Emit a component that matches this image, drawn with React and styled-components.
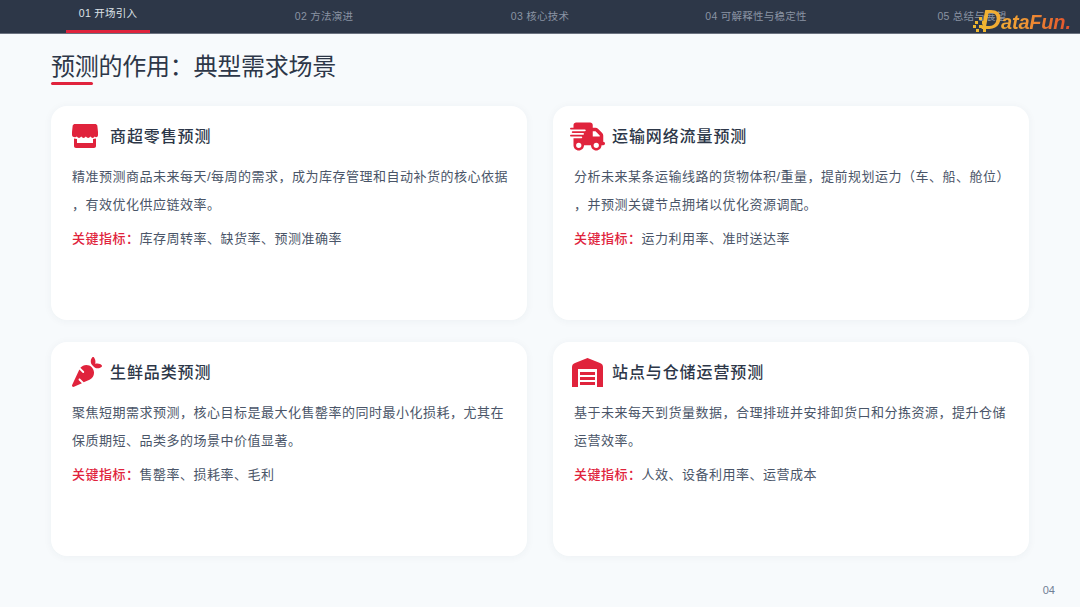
import React from 'react';
import styled, { createGlobalStyle } from 'styled-components';
import { FaTruckFast, FaCarrot } from 'react-icons/fa6';

const GlobalStyle = createGlobalStyle`
  html, body { margin: 0; padding: 0; background: #f7fafc; }
  body { font-family: "Liberation Sans", "Noto Sans CJK SC", sans-serif; }
`;

const Page = styled.div`
  width: 1080px;
  height: 607px;
  position: relative;
  overflow: hidden;
  background: #f7fafc;
  display: flex;
  flex-direction: column;
`;

const Nav = styled.nav`
  height: 33px;
  flex: none;
  display: flex;
  background: #2d3748;
  border-bottom: 1px solid #6b7280;
`;

const Tab = styled.div`
  flex: 1;
  display: flex;
  justify-content: center;
`;

const TabLabel = styled.div`
  box-sizing: border-box;
  min-width: 84px;
  height: 33px;
  display: flex;
  align-items: center;
  justify-content: center;
  padding-bottom: ${p => (p.$active ? '5px' : '2px')};
  white-space: nowrap;
  font-size: 10.5px;
  letter-spacing: 0.25px;
  color: ${p => (p.$active ? '#dfe3e8' : '#8a93a3')};
  border-bottom: ${p => (p.$active ? '3px solid #e0233c' : 'none')};
`;

const Logo = styled.div`
  position: absolute;
  top: 5px;
  left: 973px;
  display: flex;
  align-items: flex-end;
`;

const LogoText = styled.span`
  font-family: "Liberation Sans", sans-serif;
  font-weight: 700;
  font-style: italic;
  font-size: 20px;
  line-height: 29px;
  letter-spacing: -0.2px;
  margin-left: -5px;
  background: linear-gradient(90deg, #f2b632 0%, #f09a35 45%, #e2502d 100%);
  -webkit-background-clip: text;
  background-clip: text;
  color: transparent;
`;

const LogoInitial = styled.span`
  font-size: 28px;
`;

const LogoDots = styled.svg`
  flex: none;
  margin-bottom: 5px;
`;

const Main = styled.main`
  flex: 1;
  padding: 18px 51px 0;
`;

const Title = styled.h1`
  margin: 0;
  font-size: 24px;
  line-height: 30px;
  font-weight: 400;
  letter-spacing: -0.25px;
  color: #2d3748;
  &::after {
    content: '';
    display: block;
    width: 42px;
    height: 3px;
    border-radius: 2px;
    background: #e0233c;
  }
`;

const Grid = styled.div`
  margin-top: 21px;
  display: grid;
  grid-template-columns: 476px 476px;
  grid-auto-rows: 214px;
  column-gap: 26px;
  row-gap: 22px;
`;

const Card = styled.section`
  background: #fff;
  border-radius: 16px;
  box-shadow: 0 1px 8px rgba(45, 55, 72, 0.05);
  padding: 14px 21px 0;
`;

const CardHead = styled.div`
  display: flex;
  align-items: center;
  height: 32px;
  margin-bottom: 11px;
`;

const IconSlot = styled.div`
  width: ${p => 38 - p.$shift}px;
  flex: none;
  display: flex;
  color: #e0233c;
  font-size: ${p => p.$size || 24}px;
  margin-left: ${p => p.$shift}px;
`;

const CardTitle = styled.h2`
  margin: 0 0 2px;
  font-size: 16px;
  font-weight: 500;
  letter-spacing: 0.9px;
  color: #2d3748;
`;

const Line = styled.div`
  font-size: 13px;
  line-height: 28px;
  letter-spacing: 0.5px;
  color: #4a5568;
  white-space: nowrap;
`;

const Metric = styled(Line)`
  margin-top: 6px;
`;

const MetricKey = styled.strong`
  font-weight: 500;
  color: #e0233c;
`;

const PageNum = styled.div`
  position: absolute;
  right: 25px;
  bottom: 11px;
  font-size: 11px;
  color: #718096;
`;

const StoreIcon = () => (
  <svg width="26" height="24" viewBox="0 0 26 24" fill="currentColor">
    <path d="M3 0H23C24 0 25 .6 25.3 1.6L26 8V11C26 13 23.8 14 22.8 12.6C21.6 14.4 19.6 14.4 18.4 12.6C17.2 14.4 15.2 14.4 13.8 12.6C12.6 14.4 10.6 14.4 9.2 12.6C8 14.4 6 14.4 4.8 12.6C3.4 14 0 13 0 11V8L.7 1.6C1 .6 2 0 3 0Z" />
    <path d="M2 14.5L5 15V19H21V15L24 14.5V22C24 23.2 23.2 24 22 24H4C2.8 24 2 23.2 2 22Z" />
  </svg>
);

const WarehouseIcon = () => (
  <svg width="31" height="29" viewBox="0 0 31 29" fill="currentColor">
    <path d="M15.5 0L28 5C30 5.8 31 7 31 9V29H25V11H6V29H0V9C0 7 1 5.8 3 5Z" />
    <rect x="8" y="14" width="15" height="3" />
    <rect x="8" y="19" width="15" height="3" />
    <rect x="8" y="24" width="15" height="3" />
  </svg>
);

const tabs = ['01 开场引入', '02 方法演进', '03 核心技术', '04 可解释性与稳定性', '05 总结与展望'];

const cards = [
  {
    icon: <StoreIcon />, shift: 0,
    title: '商超零售预测',
    lines: ['精准预测商品未来每天/每周的需求，成为库存管理和自动补货的核心依据', '，有效优化供应链效率。'],
    metrics: '库存周转率、缺货率、预测准确率',
  },
  {
    icon: <FaTruckFast />, size: 35, shift: -4,
    title: '运输网络流量预测',
    lines: ['分析未来某条运输线路的货物体积/重量，提前规划运力（车、船、舱位）', '，并预测关键节点拥堵以优化资源调配。'],
    metrics: '运力利用率、准时送达率',
  },
  {
    icon: <FaCarrot />, size: 30, shift: 0,
    title: '生鲜品类预测',
    lines: ['聚焦短期需求预测，核心目标是最大化售罄率的同时最小化损耗，尤其在', '保质期短、品类多的场景中价值显著。'],
    metrics: '售罄率、损耗率、毛利',
  },
  {
    icon: <WarehouseIcon />, shift: -2,
    title: '站点与仓储运营预测',
    lines: ['基于未来每天到货量数据，合理排班并安排卸货口和分拣资源，提升仓储', '运营效率。'],
    metrics: '人效、设备利用率、运营成本',
  },
];

const App = () => (
  <Page>
    <GlobalStyle />
    <Nav>
      {tabs.map((t, i) => (
        <Tab key={t}>
          <TabLabel $active={i === 0}>{t}</TabLabel>
        </Tab>
      ))}
    </Nav>
    <Logo>
      <LogoDots width="13" height="15" viewBox="0 0 13 15" fill="#eeb62f">
        <rect x="6" y="0" width="3" height="3" />
        <rect x="2" y="4" width="3" height="3" />
        <rect x="9" y="4" width="3" height="3" />
        <rect x="0" y="8" width="3" height="3" />
        <rect x="6" y="8" width="3" height="3" />
        <rect x="3" y="12" width="3" height="3" />
        <rect x="10" y="12" width="3" height="3" />
      </LogoDots>
      <LogoText><LogoInitial>D</LogoInitial>ataFun.</LogoText>
    </Logo>
    <Main>
      <Title>预测的作用：典型需求场景</Title>
      <Grid>
        {cards.map(c => (
          <Card key={c.title}>
            <CardHead>
              <IconSlot $size={c.size} $shift={c.shift}>{c.icon}</IconSlot>
              <CardTitle>{c.title}</CardTitle>
            </CardHead>
            {c.lines.map(l => <Line key={l}>{l}</Line>)}
            <Metric><MetricKey>关键指标：</MetricKey>{c.metrics}</Metric>
          </Card>
        ))}
      </Grid>
    </Main>
    <PageNum>04</PageNum>
  </Page>
);

export default App;
